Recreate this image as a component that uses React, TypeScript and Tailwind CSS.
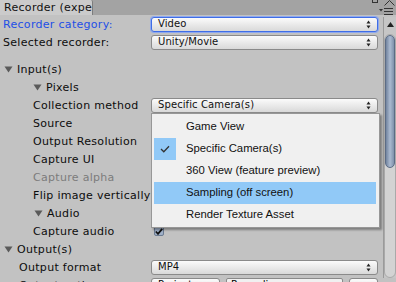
import React from "react";

const font = { fontFamily: '"DejaVu Sans", sans-serif' };

function Arrows() {
  return (
    <svg width="5" height="9" viewBox="0 0 5 9" className="shrink-0">
      <path d="M2.5 0.5 L4.5 3.5 L0.5 3.5 Z" fill="#222" />
      <path d="M0.5 5.5 L4.5 5.5 L2.5 8.5 Z" fill="#222" />
    </svg>
  );
}

function Dropdown({ text, focused }: { text: string; focused?: boolean }) {
  return (
    <div
      className={
        focused
          ? "h-[15px] w-[227px] flex items-center rounded-[3px] border border-[#3f6de6] shadow-[0_0_0_1px_#8fa9ee] bg-linear-to-b from-[#fbfbfb] to-[#d9d9d9] pl-[6px] pr-[6px]"
          : "h-[15px] w-[227px] flex items-center rounded-[3px] border border-[#8a8a8a] bg-linear-to-b from-[#fbfbfb] to-[#d9d9d9] pl-[6px] pr-[6px]"
      }
    >
      <span className="flex-1 text-[10px] leading-none text-[#111] tracking-[0.1px]">{text}</span>
      <Arrows />
    </div>
  );
}

function Tri() {
  return (
    <svg width="9" height="7" viewBox="0 0 9 7" className="shrink-0">
      <path d="M0.5 0.5 L8.5 0.5 L4.5 6.5 Z" fill="#5a5a5a" />
    </svg>
  );
}

function Row({
  pl,
  label,
  children,
  color,
  fold,
}: {
  pl: string;
  label: string;
  children?: React.ReactNode;
  color?: string;
  fold?: boolean;
}) {
  return (
    <div className="h-[18px] flex items-center">
      <div className={`w-[151px] shrink-0 flex items-center ${pl}`}>
        {fold && (
          <span className="mr-[4px] flex items-center">
            <Tri />
          </span>
        )}
        <span className={`text-[11px] leading-none whitespace-nowrap tracking-[0.3px] ${color ?? "text-[#0c0c0c]"}`}>{label}</span>
      </div>
      <div className="flex items-center">{children}</div>
    </div>
  );
}

export default function App() {
  const items = [
    "Game View",
    "Specific Camera(s)",
    "360 View (feature preview)",
    "Sampling (off screen)",
    "Render Texture Asset",
  ];
  return (
    <div className="w-[396px] h-[282px] overflow-hidden relative bg-[#c2c2c2]" style={font}>
      {/* top bar */}
      <div className="h-[15px] bg-[#a3a3a3] flex items-end relative">
        <div className="h-[15px] w-[93px] bg-[#cbcbcb] border-r border-[#7d7d7d] rounded-tr-[2px] overflow-hidden pl-[4px] flex items-center">
          <span className="text-[11px] leading-none whitespace-nowrap text-[#111] tracking-[0.3px]">Recorder (expe</span>
        </div>
        <div className="absolute left-[372px] top-[-3px] w-[6px] h-[6px] border border-[#333]" />
        <svg className="absolute left-[384px] top-0" width="11" height="6" viewBox="0 0 11 6">
          <path d="M0.5 5.5 L5.5 0.5 L10.5 5.5" stroke="#333" fill="none" />
        </svg>
        <svg className="absolute left-[379px] top-[8px]" width="15" height="7" viewBox="0 0 15 7">
          <path d="M0 1 L4 1 L2 3.5 Z" fill="#333" />
          <rect x="5" y="0" width="9" height="1" fill="#333" />
          <rect x="5" y="3" width="9" height="1" fill="#333" />
          <rect x="5" y="6" width="9" height="1" fill="#333" />
        </svg>
      </div>

      <div className="flex">
        {/* content */}
        <div className="w-[383px] shrink-0">
          <Row pl="pl-[3px]" label="Recorder category:" color="text-[#1e4fe6]">
            <Dropdown text="Video" focused />
          </Row>
          <Row pl="pl-[3px]" label="Selected recorder:">
            <Dropdown text="Unity/Movie" />
          </Row>
          <div className="h-[9px]" />
          <Row pl="pl-[4px]" label="Input(s)" fold />
          <Row pl="pl-[33px]" label="Pixels" fold />
          <Row pl="pl-[33px]" label="Collection method">
            <Dropdown text="Specific Camera(s)" />
          </Row>
          <Row pl="pl-[33px]" label="Source" />
          <Row pl="pl-[33px]" label="Output Resolution" />
          <Row pl="pl-[33px]" label="Capture UI" />
          <Row pl="pl-[33px]" label="Capture alpha" color="text-[#7c7c7c]" />
          <Row pl="pl-[33px]" label="Flip image vertically" />
          <Row pl="pl-[34px]" label="Audio" fold />
          <Row pl="pl-[33px]" label="Capture audio">
            <div className="ml-[3px] w-[10px] h-[10px] rounded-[2px] border border-[#6b7a90] bg-[#9fb0c8] flex items-center justify-center">
              <svg width="8" height="7" viewBox="0 0 8 7">
                <path d="M0.8 3.5 L3 5.8 L7.2 0.8" stroke="#111" strokeWidth="1.8" fill="none" />
              </svg>
            </div>
          </Row>
          <Row pl="pl-[4px]" label="Output(s)" fold />
          <Row pl="pl-[19px]" label="Output format">
            <Dropdown text="MP4" />
          </Row>
          <Row pl="pl-[19px]" label="Output path">
            <div className="flex items-center gap-[6px]">
              <div className="h-[15px] w-[69px] rounded-[3px] border border-[#8a8a8a] bg-linear-to-b from-[#fbfbfb] to-[#d9d9d9] pl-[6px] flex items-center">
                <span className="text-[10px] leading-none">Project</span>
              </div>
              <div className="h-[15px] w-[117px] rounded-[2px] border border-[#8a8a8a] bg-[#f0f0f0] pl-[4px] flex items-center">
                <span className="text-[10px] leading-none">Recordings</span>
              </div>
              <div className="h-[15px] w-[29px] rounded-[3px] border border-[#8a8a8a] bg-linear-to-b from-[#fbfbfb] to-[#d9d9d9] flex items-center justify-center">
                <span className="text-[10px] leading-none">...</span>
              </div>
            </div>
          </Row>
        </div>

        {/* scrollbar */}
        <div className="w-[13px] shrink-0 mt-[2px] h-[261px] border-l border-[#9a9a9a] bg-[#c6c6c6] flex flex-col items-center">
          <svg width="7" height="5" viewBox="0 0 7 5" className="mt-[5px]">
            <path d="M0 5 L3.5 0 L7 5 Z" fill="#222" />
          </svg>
          <div className="mt-[7px] w-[12px] flex-1 rounded-[6px] bg-[#d3d3d3] border border-[#a9a9a9] flex flex-col">
            <div className="h-[133px] rounded-[6px] bg-linear-to-r from-[#72849f] via-[#abbad0] to-[#8092ab] border border-[#5c6c85]" />
          </div>
        </div>
      </div>

      {/* popup menu */}
      <div
        className="absolute left-[151px] top-[113px] w-[229px] h-[115px] bg-[#f0f0f0] border border-[#979797] shadow-[2px_2px_2px_rgba(0,0,0,0.35)] pt-[2px]"
        style={{ fontFamily: '"Liberation Sans", Arial, sans-serif' }}
      >
        {items.map((it, i) => (
          <div
            key={it}
            className={
              i === 3
                ? "h-[22px] ml-[2px] mr-[3px] flex items-center bg-[#91c9f7]"
                : "h-[22px] ml-[2px] mr-[3px] flex items-center"
            }
          >
            <div
              className={
                i === 1
                  ? "w-[22px] h-[22px] bg-[#91c9f7] flex items-center justify-center"
                  : "w-[22px] h-[22px]"
              }
            >
              {i === 1 && (
                <svg width="10" height="8" viewBox="0 0 10 8">
                  <path d="M1 4 L3.8 6.8 L9 1.2" stroke="#333" strokeWidth="1.3" fill="none" />
                </svg>
              )}
            </div>
            <span className="ml-[10px] text-[11.3px] leading-none text-[#111] whitespace-nowrap">{it}</span>
          </div>
        ))}
      </div>
    </div>
  );
}
